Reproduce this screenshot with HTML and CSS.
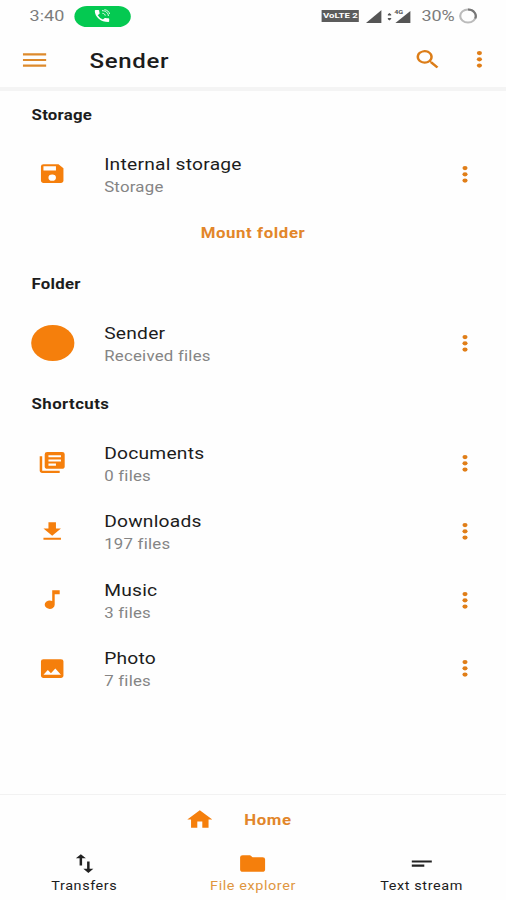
FILE: index.html
```
<!DOCTYPE html>
<html lang="en">
<head>
<meta charset="utf-8">
<title>Sender</title>
<link rel="stylesheet" href="styles.css">
</head>
<body>
<svg width="0" height="0" class="defs">
  <symbol id="more" viewBox="0 0 24 24"><circle cx="12" cy="5.800" r="2.050"/><circle cx="12" cy="11.800" r="2.050"/><circle cx="12" cy="17.800" r="2.050"/></symbol>
</svg>
<div class="screen">
  <div class="status">
    <span class="time">3:40</span>
    <span class="call"><svg viewBox="0 0 24 24"><path d="M20 15.500c-1.250 0-2.450-.2-3.570-.57-.35-.11-.74-.03-1.020.24l-2.200 2.200a15.050 15.050 0 0 1-6.590-6.580l2.200-2.210c.28-.27.36-.66.25-1.010A11.360 11.360 0 0 1 8.500 4c0-.55-.45-1-1-1H4c-.55 0-1 .45-1 1 0 9.390 7.610 17 17 17 .55 0 1-.45 1-1v-3.500c0-.55-.45-1-1-1z"/><path d="M12 4c4.500 0 8 3.500 8 8M12.500 8c2 0 3.500 1.500 3.500 3.500M15 2.500c3.500.5 6 3 6.500 6.500" fill="none" stroke="#fff" stroke-width="1.200"/></svg></span>
    <span class="grow"></span>
    <span class="lte">VoLTE 2</span>
    <svg class="signal" viewBox="0 0 13 13"><path d="M0 13 13 0v13z"/></svg>
    <svg class="signal2" viewBox="0 0 20 15"><path d="M0 5.500 1.500 4 3 5.500v1H0zM0 9h3v1L1.500 11.500 0 10z"/><path d="M6.500 14 19 2v12z"/><path d="M5 1.500h9L8 8H5z" fill="#fff"/><text x="5.500" y="5.500">4G</text></svg>
    <span class="pct">30%</span>
    <svg class="battery" viewBox="0 0 16 16"><circle cx="8" cy="8" r="6.500" stroke="#bbb"/><path d="M8 1.500A6.500 6.500 0 0 1 14 10.500" stroke="#777"/></svg>
  </div>
  <header>
    <svg class="menu" viewBox="0 0 20 14"><path d="M0 0h20v2.300H0zM0 5.850h20v2.300H0zM0 11.700h20V14H0z"/></svg>
    <h1>Sender</h1>
    <svg class="icon search" viewBox="0 0 24 24"><path d="M15.500 14h-.79l-.28-.27A6.500 6.500 0 1 0 13.730 14.430l.27.28v.79l5 4.990L20.490 19zM9.500 14a4.500 4.500 0 1 1 0-9 4.500 4.500 0 0 1 0 9z"/></svg>
    <svg class="icon"><use href="#more"/></svg>
  </header>
  <main>
    <h2>Storage</h2>
    <div class="row">
      <div class="lead"><svg class="icon" viewBox="0 0 24 24"><path d="M17 3H5a2 2 0 0 0-2 2v14c0 1.100.9 2 2 2h14c1.100 0 2-.9 2-2V7zm-5 16a3 3 0 1 1 0-6 3 3 0 0 1 0 6zm3-10H5V5h10z"/></svg></div>
      <div class="text"><b>Internal storage</b><small>Storage</small></div>
      <svg class="icon"><use href="#more"/></svg>
    </div>
    <div class="mount">Mount folder</div>
    <h2>Folder</h2>
    <div class="row">
      <div class="lead"><i class="disc"></i></div>
      <div class="text"><b>Sender</b><small>Received files</small></div>
      <svg class="icon"><use href="#more"/></svg>
    </div>
    <h2 class="wide">Shortcuts</h2>
    <div class="row">
      <div class="lead"><svg class="icon" viewBox="0 0 24 24"><path d="M4 6H2v14c0 1.100.9 2 2 2h14v-2H4zM20 2H8a2 2 0 0 0-2 2v12c0 1.100.9 2 2 2h12c1.100 0 2-.9 2-2V4a2 2 0 0 0-2-2zm-1 9H9V9h10zm-4 4H9v-2h6zm4-8H9V5h10z"/></svg></div>
      <div class="text"><b>Documents</b><small>0 files</small></div>
      <svg class="icon"><use href="#more"/></svg>
    </div>
    <div class="row">
      <div class="lead"><svg class="icon" viewBox="0 0 24 24"><path d="M19 9h-4V3H9v6H5l7 7zM5 18v2h14v-2z"/></svg></div>
      <div class="text"><b>Downloads</b><small>197 files</small></div>
      <svg class="icon"><use href="#more"/></svg>
    </div>
    <div class="row">
      <div class="lead"><svg class="icon" viewBox="0 0 24 24"><path d="M12 3v10.550A4 4 0 1 0 14 17V7h4V3z"/></svg></div>
      <div class="text"><b>Music</b><small>3 files</small></div>
      <svg class="icon"><use href="#more"/></svg>
    </div>
    <div class="row">
      <div class="lead"><svg class="icon" viewBox="0 0 24 24"><path d="M21 19V5a2 2 0 0 0-2-2H5a2 2 0 0 0-2 2v14c0 1.100.9 2 2 2h14c1.100 0 2-.9 2-2zM8.500 13.500l2.500 3.010L14.500 12l4.500 6H5z"/></svg></div>
      <div class="text"><b>Photo</b><small>7 files</small></div>
      <svg class="icon"><use href="#more"/></svg>
    </div>
  </main>
  <footer>
    <div class="home"><svg class="icon" viewBox="0 0 24 24"><path d="M10 20v-6h4v6h5v-8h3L12 3 2 12h3v8z"/></svg><span>Home</span></div>
    <nav>
      <div class="tab"><svg class="icon" viewBox="0 0 24 24"><path d="M16 17.010V10h-2v7.010h-3L15 21l4-3.990zM9 3 5 6.990h3V14h2V6.990h3z"/></svg><span>Transfers</span></div>
      <div class="tab active"><svg class="icon" viewBox="0 0 24 24"><path d="M10 4H4a2 2 0 0 0-2 2v12c0 1.100.9 2 2 2h16c1.100 0 2-.9 2-2V8a2 2 0 0 0-2-2h-8z"/></svg><span>File explorer</span></div>
      <div class="tab"><svg class="icon" viewBox="0 0 24 24"><path d="M4 9h16v2H4zM4 13h10v2H4z"/></svg><span>Text stream</span></div>
    </nav>
  </footer>
</div>
</body>
</html>
```
FILE: styles.css
```
* { box-sizing: border-box; }
html, body { margin: 0; height: 900px; overflow: hidden; background: #fefefe; }
.defs { display: block; width: 0; height: 0; }

/* The whole screen is set narrow and stretched horizontally. */
.screen {
  width: 421.667px;
  height: 900px;
  display: flex;
  flex-direction: column;
  transform: scaleX(1.2);
  transform-origin: 0 0;
  font-family: Roboto, "Liberation Sans", sans-serif;
  color: #1c1c1c;
}
svg { display: block; flex: none; }
.icon { width: 25px; height: 25px; fill: #f57f0c; }
.grow { flex: 1; }

.status { height: 32px; display: flex; align-items: center; padding: 0 23.500px 0 24.500px; color: #7c7c7c; font-size: 15px; }
.time { width: 37px; letter-spacing: .1px; }
.call { width: 47.500px; height: 21px; border-radius: 11px; background: #04c951; display: flex; align-items: center; justify-content: center; }
.call svg { width: 16px; height: 16px; fill: #fff; }
.lte { width: 31px; height: 12px; background: #5c5c5c; color: #fff; font-size: 8px; font-weight: 700; line-height: 12px; text-align: center; white-space: nowrap; }
.signal { width: 13px; height: 13px; margin-left: 6px; fill: #555; }
.signal2 { width: 20px; height: 15px; margin-left: 5px; fill: #555; }
.signal2 text { font-size: 6px; font-weight: 700; }
.pct { margin-left: 8px; width: 31px; }
.battery { width: 16px; height: 16px; fill: none; stroke-width: 1.800; }

header { height: 59px; display: flex; align-items: center; padding: 0 9.500px 0 19.300px; border-bottom: 4px solid #f4f4f4; }
header h1 { margin: 0; flex: 1; padding: 2px 0 0 35.700px; font-size: 20px; line-height: 24px; font-weight: 500; letter-spacing: .6px; }
.menu { width: 19.500px; height: 14px; fill: #dd8a2c; }
header .icon { fill: #dc7d18; }
.search { margin-right: 18.500px; }

main { flex: 1; }
h2 { margin: 0; height: 46px; padding-left: 26.300px; font-size: 14px; line-height: 48px; font-weight: 700; letter-spacing: .2px; }
.wide { letter-spacing: .35px; }
.row { height: 68.500px; display: flex; align-items: center; padding: 0 21.700px 0 26.300px; }
h2 + .row { margin-top: 2.750px; }
.row + h2 { margin-top: 2.750px; }
.lead { width: 60.500px; }
.lead .icon { margin: -1px 0 0 5.200px; }
.disc { display: block; width: 36px; height: 36px; border-radius: 50%; background: #f57f0c; }
.text { flex: 1; display: flex; flex-direction: column; padding-top: 2.500px; }
.text b { font-size: 16px; line-height: 24px; font-weight: 400; letter-spacing: .2px; }
.text small { font-size: 14px; line-height: 21.500px; color: #858585; letter-spacing: .2px; }
.row > .icon, header > .icon:last-child { fill: #e07e18; }
.mount { height: 51.750px; line-height: 50.500px; text-align: center; color: #e2862a; font-size: 14px; font-weight: 700; letter-spacing: .5px; }

footer { height: 106.500px; border-top: 1.500px solid #f2f2f2; }
.home { height: 50px; display: flex; align-items: center; padding-left: 153.500px; color: #e2862a; font-size: 14px; font-weight: 700; letter-spacing: .5px; }
.home span { margin-left: 25px; padding-top: 1px; }
nav { display: flex; padding-top: 6.500px; }
.tab { flex: 1; display: flex; flex-direction: column; align-items: center; font-size: 12px; letter-spacing: .5px; }
.tab .icon { fill: #222; }
.tab span { line-height: 21px; }
.active { color: #df963f; }
.active .icon { fill: #f57f0c; }
```
